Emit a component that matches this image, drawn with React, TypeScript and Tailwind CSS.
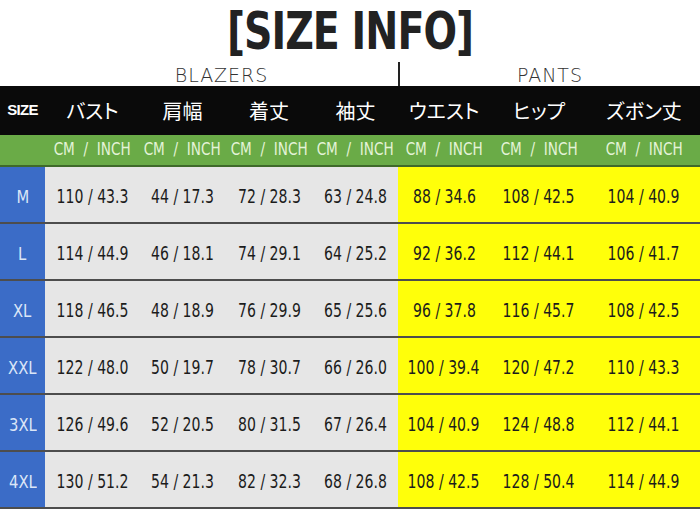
const cols = "grid grid-cols-[45px_95px_85px_88px_85px_92px_98px_112px]";

const heads = ["バスト", "肩幅", "着丈", "袖丈", "ウエスト", "ヒップ", "ズボン丈"];

const rows: [string, string[]][] = [
  ["M", ["110 / 43.3", "44 / 17.3", "72 / 28.3", "63 / 24.8", "88 / 34.6", "108 / 42.5", "104 / 40.9"]],
  ["L", ["114 / 44.9", "46 / 18.1", "74 / 29.1", "64 / 25.2", "92 / 36.2", "112 / 44.1", "106 / 41.7"]],
  ["XL", ["118 / 46.5", "48 / 18.9", "76 / 29.9", "65 / 25.6", "96 / 37.8", "116 / 45.7", "108 / 42.5"]],
  ["XXL", ["122 / 48.0", "50 / 19.7", "78 / 30.7", "66 / 26.0", "100 / 39.4", "120 / 47.2", "110 / 43.3"]],
  ["3XL", ["126 / 49.6", "52 / 20.5", "80 / 31.5", "67 / 26.4", "104 / 40.9", "124 / 48.8", "112 / 44.1"]],
  ["4XL", ["130 / 51.2", "54 / 21.3", "82 / 32.3", "68 / 26.8", "108 / 42.5", "128 / 50.4", "114 / 44.9"]],
];

const sans = "font-['DejaVu_Sans',sans-serif]";

export default function App() {
  return (
    <div className="w-[700px] h-[518px] bg-white overflow-hidden">
      <div className="h-[62px] flex items-center justify-center">
        <h1 className={`${sans} font-bold text-[52px] leading-none text-[#222] tracking-tight inline-block scale-x-[0.76]`}>
          [SIZE INFO]
        </h1>
      </div>

      <div className="h-[24px] flex">
        <div className="w-[45px]" />
        <div className={`w-[353px] flex items-end justify-center ${sans} font-extralight text-[19px] leading-none tracking-wider text-[#333] pb-[1px]`}>
          BLAZERS
        </div>
        <div className="w-[2px] bg-[#222]" />
        <div className={`flex-1 flex items-end justify-center ${sans} font-extralight text-[19px] leading-none tracking-wider text-[#333] pb-[1px]`}>
          PANTS
        </div>
      </div>

      <div className={`${cols} h-[49px] bg-[#0a0a0a] text-white items-center text-center`}>
        <div className="font-['Liberation_Sans',sans-serif] font-bold text-[15px] tracking-tighter">SIZE</div>
        {heads.map((h) => (
          <div key={h} className="font-['Noto_Sans_CJK_JP',sans-serif] [font-feature-settings:'palt'] text-[20px]">
            {h}
          </div>
        ))}
      </div>

      <div className={`${cols} h-[32px] bg-[#6aab47] border-b-2 border-[#3f6a2a] items-center text-center`}>
        <div />
        {heads.map((h) => (
          <div key={h} className="flex justify-center">
            <span className={`${sans} text-[17px] text-[#e4f3d8] whitespace-pre inline-block scale-x-[0.8]`}>
              {"CM  /  INCH"}
            </span>
          </div>
        ))}
      </div>

      {rows.map(([size, vals]) => (
        <div key={size} className={`${cols} h-[57px] border-b-2 border-[#4d4d4d]`}>
          <div className="bg-[#3b6cc7] flex items-center justify-center pt-1">
            <span className={`${sans} text-[18px] text-[#dbe6f7] inline-block scale-x-[0.82]`}>{size}</span>
          </div>
          {vals.map((v, i) => (
            <div
              key={i}
              className={`flex items-center justify-center pt-1 ${i < 4 ? "bg-[#e6e6e6]" : "bg-[#ffff0a]"}`}
            >
              <span className={`${sans} font-medium text-[19px] text-[#1c1c1c] whitespace-pre inline-block scale-x-[0.74]`}>
                {v}
              </span>
            </div>
          ))}
        </div>
      ))}
    </div>
  );
}
